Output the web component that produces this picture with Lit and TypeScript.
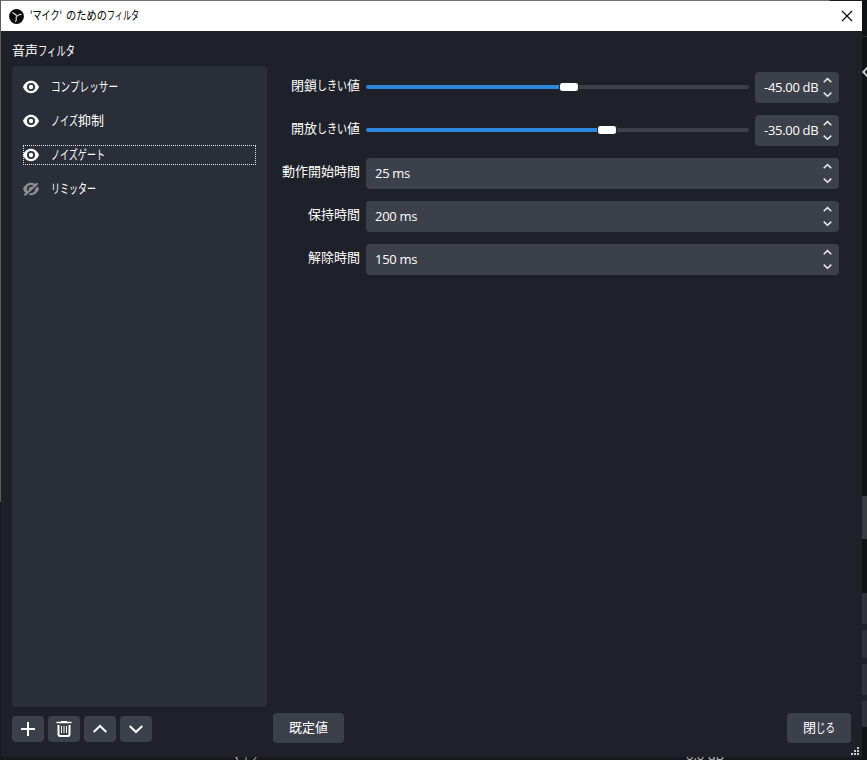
import { LitElement, html, svg, css } from "lit";
import { customElement, property } from "lit/decorators.js";

type Run = [text: string, width: number];

/** One line of text whose runs are condensed to the given widths. */
@customElement("ui-label")
class UiLabel extends LitElement {
  static styles = css`
    :host { display: block; flex: none; height: 18px; }
    svg { display: block; overflow: visible; }
    text { font-family: "Noto Sans CJK JP", sans-serif; fill: currentColor; white-space: pre; }
  `;
  @property({ attribute: false }) runs: Run[] = [];
  @property({ type: Number }) size = 13;

  render() {
    let x = 0;
    const parts = this.runs.map(([t, w]) => {
      const part = svg`<tspan x=${x} textLength=${w} lengthAdjust="spacingAndGlyphs">${t}</tspan>`;
      x += w;
      return part;
    });
    return html`<svg width=${x} height="18"><text y="13" font-size=${this.size}>${parts}</text></svg>`;
  }
}

/** Numeric field with up and down arrows. */
@customElement("spin-box")
class SpinBox extends LitElement {
  static styles = css`
    :host {
      display: flex; align-items: center; justify-content: space-between; box-sizing: border-box;
      height: 31px; padding: 0 7px 0 9px; border-radius: 4px; background: #3c404b; color: #fff;
      font: 13px/31px "Open Sans", "Noto Sans", sans-serif; white-space: nowrap; letter-spacing: -0.3px;
    }
    svg { display: block; flex: none; }
  `;
  @property() value = "";

  render() {
    return html`<span>${this.value}</span>
      <svg width="9" height="21" viewBox="0 0 9 21" fill="none" stroke="#e8e9eb" stroke-width="1.5">
        <path d="M.7 5.200 4.500 1.600 8.300 5.200M.7 15.600 4.500 19.200 8.300 15.600" />
      </svg>`;
  }
}

const eye = html`<svg width="16" height="14" viewBox="0 0 16 14">
  <path fill="#fff" fill-rule="evenodd" d="M0 7C1.300 3.500 4.400 .8 8 .8s6.700 2.700 8 6.200c-1.300 3.500-4.400 6.200-8 6.200S1.300 10.500 0 7ZM8 3a4 4 0 1 0 0 8 4 4 0 0 0 0-8Z" />
  <circle cx="8" cy="7" r="2.200" fill="#fff" />
</svg>`;

const eyeOff = html`<svg width="16" height="14" viewBox="0 0 16 14">
  <path fill="#8d8d8f" fill-rule="evenodd" d="M0 7C1.300 3.500 4.400 .8 8 .8s6.700 2.700 8 6.200c-1.300 3.500-4.400 6.200-8 6.200S1.300 10.500 0 7ZM8 3a4 4 0 1 0 0 8 4 4 0 0 0 0-8Z" />
  <circle cx="8" cy="7" r="2.200" fill="#8d8d8f" />
  <path d="M3 14.200 16 2.200" stroke="#2a2e38" stroke-width="1.500" />
  <path d="M1.500 13.300 14.500 1.200" stroke="#8d8d8f" stroke-width="2.200" />
</svg>`;

const toolIcons = [
  html`<svg width="14" height="14" viewBox="0 0 14 14"><path d="M0 7h14M7 0v14" stroke="#fff" stroke-width="2" /></svg>`,
  html`<svg width="16" height="16" viewBox="0 0 16 16" fill="none" stroke="#fff">
    <path d="M.5 1.500h15M5 .5h6" stroke-width="1.600" />
    <path d="M2.500 4V13.200Q2.500 15 4.300 15H11.700Q13.500 15 13.500 13.200V4" stroke-width="2" />
    <path d="M5.500 5v7M8 5v7M10.500 5v7" stroke-width="1" />
  </svg>`,
  html`<svg width="16" height="10" viewBox="0 0 16 10"><path d="M1.700 8 8 2l6.300 6" fill="none" stroke="#fff" stroke-width="2" /></svg>`,
  html`<svg width="16" height="10" viewBox="0 0 16 10"><path d="M1.700 2 8 8l6.300-6" fill="none" stroke="#fff" stroke-width="2" /></svg>`,
];

const filters: { runs: Run[]; on: boolean; current?: boolean }[] = [
  { runs: [["コンプレッサー", 67]], on: true },
  { runs: [["ノイズ", 27], ["抑制", 26]], on: true },
  { runs: [["ノイズゲート", 54]], on: true, current: true },
  { runs: [["リミッター", 45]], on: false },
];

const sliders: { runs: Run[]; fill: number; value: string }[] = [
  { runs: [["閉鎖", 26], ["しきい", 30], ["値", 13]], fill: 203, value: "-45.00 dB" },
  { runs: [["開放", 26], ["しきい", 30], ["値", 13]], fill: 241, value: "-35.00 dB" },
];

const times: { runs: Run[]; value: string }[] = [
  { runs: [["動作開始時間", 78]], value: "25 ms" },
  { runs: [["保持時間", 52]], value: "200 ms" },
  { runs: [["解除時間", 52]], value: "150 ms" },
];

@customElement("app-root")
class AppRoot extends LitElement {
  static styles = css`
    :host { display: block; position: relative; width: 867px; height: 760px; overflow: hidden; background: #17181d; color: #fff; }
    * { box-sizing: border-box; }
    svg { display: block; flex: none; }

    .behind { position: absolute; }
    .edge-top { left: 0; top: 0; width: 830px; height: 1px; background: #707070; }
    .edge-left { left: 0; top: 0; width: 1px; height: 502px; background: #5d5d5d; }
    .right { left: 862px; top: 0; width: 5px; height: 760px; background: #111214; }
    .right-line { left: 862px; top: 36px; width: 5px; height: 1px; background: #303136; }
    .right-a { left: 862px; top: 496px; width: 5px; height: 43px; background: #3a3a43; }
    .right-b { left: 862px; top: 593px; width: 5px; height: 134px; background: #30323b; }
    .gap { left: 862px; width: 5px; height: 6px; background: #1f222b; }
    .g1 { top: 624px; } .g2 { top: 658px; } .g3 { top: 695px; }
    .chevron { left: 861px; top: 65px; }
    .under { height: 3px; top: 757px; overflow: hidden; }
    .under-mic { left: 232px; width: 30px; }
    .under-mic ui-label { margin-top: -10px; color: #bbb; }
    .under-db { left: 686px; width: 64px; font: 13px/18px "Open Sans", sans-serif; color: #bbb; }
    .under-db span { display: block; margin-top: -11px; }

    .window { position: absolute; left: 1px; top: 1px; width: 861px; height: 756px; display: flex; flex-direction: column; background: #1f212a; }
    .title { flex: none; height: 30px; display: flex; align-items: center; padding: 0 9px 0 8px; background: #fff; color: #000; }
    .title ui-label { margin-left: 6px; }
    .title .close { margin-left: auto; margin-top: -1px; }
    .body { flex: 1; display: flex; padding: 11px 11px 0; }

    .left { width: 255px; display: flex; flex-direction: column; }
    .list { height: 641px; margin-top: 6px; padding: 4px 11px; border-radius: 4px; background: #2a2e38; }
    .item { height: 34px; display: flex; align-items: center; }
    .row { flex: 1; height: 20px; display: flex; align-items: center; gap: 12px; outline: 0 dotted #e5e5e5; }
    .row.current { outline-width: 1px; outline-offset: -1px; }
    .tools { display: flex; gap: 4px; margin-top: 9px; }
    .tool { width: 32px; height: 26px; display: flex; align-items: center; justify-content: center; border-radius: 4px; background: #3c404b; }

    .main { flex: 1; display: flex; flex-direction: column; margin-left: 6px; padding-top: 30px; }
    .form { flex: 1; display: flex; flex-direction: column; gap: 12px; padding-right: 12px; }
    .field { height: 31px; display: flex; }
    .name { width: 87px; display: flex; justify-content: flex-end; padding-top: 5px; }
    .ctl { flex: 1; display: flex; align-items: center; margin-left: 6px; }
    .ctl spin-box { flex: 1; }
    .ctl .short { flex: none; width: 84px; margin-left: 6px; }
    .track { flex: 1; height: 10px; display: flex; align-items: center; margin-bottom: 1px; }
    .fill { height: 4px; background: #2b86dc; border-radius: 2px 0 0 2px; }
    .knob { width: 20px; height: 8px; margin: 0 0 0 -10px; background: #fff; border: 1px solid #1f212a; border-width: 0 1px; border-radius: 3px; }
    .rest { flex: 1; height: 4px; background: #3c404b; border-radius: 0 2px 2px 0; }

    .footer { height: 30px; display: flex; justify-content: space-between; margin-bottom: 14px; }
    .btn { height: 30px; display: flex; align-items: center; justify-content: center; border-radius: 4px; background: #3c404b; }
    .defaults { width: 71px; }
    .shut { width: 64px; }
    .grip { position: absolute; right: 2px; bottom: 1px; }
  `;

  render() {
    return html`
      <div class="behind edge-top"></div>
      <div class="behind edge-left"></div>
      <div class="behind right"></div>
      <div class="behind right-line"></div>
      <div class="behind right-a"></div>
      <div class="behind right-b"></div>
      <div class="behind gap g1"></div>
      <div class="behind gap g2"></div>
      <div class="behind gap g3"></div>
      <svg class="behind chevron" width="6" height="14" viewBox="0 0 6 14"><path d="M7.500 1.500 2.300 7l5.200 5.500" fill="none" stroke="#ccc" stroke-width="2" /></svg>
      <div class="behind under under-mic"><ui-label .runs=${[["マイク", 27]]}></ui-label></div>
      <div class="behind under under-db"><span>0.0 dB</span></div>

      <div class="window">
        <div class="title">
          <svg width="15" height="15" viewBox="0 0 15 15">
            <circle cx="7.500" cy="7.500" r="7.400" fill="#0a0a0a" />
            <g fill="none" stroke="#d8d8d8" stroke-width="1.200">
              <path d="M7.500 7.500C8 5.200 5.800 5.400 3.300 3.400" />
              <path d="M7.500 7.500C9.600 6.600 9.800 4.700 12.600 5.500" />
              <path d="M7.500 7.500C6.300 9.300 8.600 10.600 6.300 12.700" />
            </g>
          </svg>
          <ui-label .size=${12} .runs=${[["'マイク'", 32], [" ", 4], ["のための", 41], ["フィルタ", 32]]}></ui-label>
          <svg class="close" width="12" height="12" viewBox="0 0 12 12"><path d="m1 1 10 10M11 1 1 11" stroke="#000" stroke-width="1.100" /></svg>
        </div>

        <div class="body">
          <div class="left">
            <ui-label .runs=${[["音声", 26], ["フィルタ", 37]]}></ui-label>
            <div class="list">
              ${filters.map(
                (f) => html`<div class="item">
                  <div class="row ${f.current ? "current" : ""}">
                    ${f.on ? eye : eyeOff}<ui-label .runs=${f.runs}></ui-label>
                  </div>
                </div>`
              )}
            </div>
            <div class="tools">${toolIcons.map((i) => html`<div class="tool">${i}</div>`)}</div>
          </div>

          <div class="main">
            <div class="form">
              ${sliders.map(
                (s) => html`<div class="field">
                  <div class="name"><ui-label .runs=${s.runs}></ui-label></div>
                  <div class="ctl">
                    <div class="track">
                      <div class="fill" style="width:${s.fill}px"></div>
                      <div class="knob"></div>
                      <div class="rest"></div>
                    </div>
                    <spin-box class="short" .value=${s.value}></spin-box>
                  </div>
                </div>`
              )}
              ${times.map(
                (t) => html`<div class="field">
                  <div class="name"><ui-label .runs=${t.runs}></ui-label></div>
                  <div class="ctl"><spin-box .value=${t.value}></spin-box></div>
                </div>`
              )}
            </div>
            <div class="footer">
              <div class="btn defaults"><ui-label .runs=${[["既定値", 39]]}></ui-label></div>
              <div class="btn shut"><ui-label .runs=${[["閉", 13], ["じる", 19]]}></ui-label></div>
            </div>
          </div>
        </div>

        <svg class="grip" width="9" height="9" viewBox="0 0 9 9" fill="#c9c9c9">
          <path d="M6 0h2v2H6zM3 3h2v2H3zM6 3h2v2H6zM0 6h2v2H0zM3 6h2v2H3zM6 6h2v2H6z" />
        </svg>
      </div>
    `;
  }
}
